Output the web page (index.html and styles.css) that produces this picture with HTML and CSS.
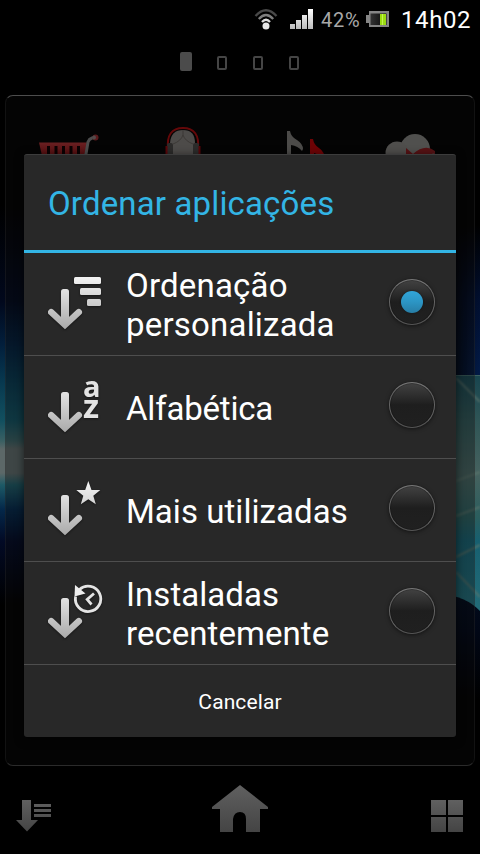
FILE: index.html
```html
<!DOCTYPE html>
<html lang="pt">
<head>
<meta charset="utf-8">
<title>Ordenar aplicações</title>
<link rel="stylesheet" href="styles.css">
</head>
<body>
<div class="screen">
  <svg class="wallpaper" width="480" height="854" viewBox="0 0 480 854" aria-hidden="true">
    <defs>
      <linearGradient id="wl" x1="0" y1="0" x2="0" y2="1">
        <stop offset="0" stop-color="#000"/><stop offset=".24" stop-color="#01081c"/><stop offset=".35" stop-color="#021f3c"/>
        <stop offset=".44" stop-color="#07384f"/><stop offset=".54" stop-color="#12505f"/><stop offset=".59" stop-color="#3a6063"/><stop offset=".61" stop-color="#5c6868"/><stop offset=".67" stop-color="#5c6868"/>
        <stop offset=".7" stop-color="#1d5a66"/><stop offset=".76" stop-color="#04284a"/><stop offset=".84" stop-color="#020a25"/><stop offset="1" stop-color="#000"/>
      </linearGradient>
      <linearGradient id="wr" x1="0" y1="0" x2="0" y2="1">
        <stop offset="0" stop-color="#000"/><stop offset=".5" stop-color="#010f30"/><stop offset="1" stop-color="#021b48"/>
      </linearGradient>
      <linearGradient id="wt" x1="0" y1="0" x2="0" y2="1">
        <stop offset="0" stop-color="#18454f"/><stop offset=".2" stop-color="#305656"/><stop offset=".42" stop-color="#46625f"/>
        <stop offset=".6" stop-color="#2b5e5e"/><stop offset=".7" stop-color="#176070"/><stop offset="1" stop-color="#236c78"/>
      </linearGradient>
      <linearGradient id="wb" x1="0" y1="0" x2="0" y2="1">
        <stop offset="0" stop-color="#020b1c"/><stop offset=".35" stop-color="#010716"/><stop offset="1" stop-color="#000"/>
      </linearGradient>
      <linearGradient id="fade" x1="0" y1="0" x2="1" y2="0">
        <stop offset="0" stop-color="#000" stop-opacity=".75"/><stop offset=".7" stop-color="#000" stop-opacity=".2"/><stop offset="1" stop-color="#000" stop-opacity="0"/>
      </linearGradient>
      <filter id="soft" x="-50%" y="-20%" width="200%" height="140%"><feGaussianBlur stdDeviation="1"/></filter>
    </defs>
    <rect x="0" y="205" width="40" height="400" fill="url(#wl)"/>
    <rect x="440" y="225" width="40" height="150" fill="url(#wr)"/>
    <rect x="450" y="225" width="30" height="150" fill="url(#fade)"/>
    <path d="M440 375H480V612Q466 600 440 596Z" fill="url(#wt)"/>
    <path d="M456 378L480 402M456 481L480 472M456 516L480 507M456 557L480 545M456 572L480 597" fill="none" stroke="#5c756c" stroke-width="1.500" filter="url(#soft)"/>
    <path d="M456 375.500H480" stroke="#3b6060"/>
    <path d="M440 594Q466 596 480 611V700H440Z" fill="url(#wb)"/>
  </svg>

  <header class="status">
    <svg class="wifi" width="24" height="22" viewBox="0 0 24 22">
      <g fill="none" stroke-width="2.300">
        <path d="M1.500 7Q12-4.500 22.500 7" stroke="#494949"/>
        <path d="M4.800 10Q12 2 19.200 10" stroke="#7d7d7d"/>
        <path d="M8 13Q12 8.500 16 13" stroke="#ddd"/>
      </g>
      <circle cx="12" cy="17" r="3.500" fill="#e8e8e8"/>
    </svg>
    <svg class="signal" width="24" height="20" viewBox="0 0 24 20">
      <defs><linearGradient id="sg" x1="0" y1="0" x2="0" y2="1"><stop offset="0" stop-color="#fff"/><stop offset="1" stop-color="#bbb"/></linearGradient></defs>
      <path d="M0 15h5v5H0zM6 11h5v9H6zM12 6h5v14h-5zM18 0h5v20h-5z" fill="url(#sg)"/>
    </svg>
    <span class="percent">42%</span>
    <svg class="battery" width="23" height="17" viewBox="0 0 23 17">
      <defs><linearGradient id="bg" x1="0" y1="0" x2="1" y2="0"><stop offset="0" stop-color="#333"/><stop offset="1" stop-color="#050505"/></linearGradient></defs>
      <path d="M3 0H23V16H3V12H0V4H3Z" fill="#858585"/>
      <rect x="4.500" y="2.500" width="16" height="11.500" fill="url(#bg)"/>
      <rect x="14" y="3" width="6" height="11" fill="#9bdc12"/><path d="M16.500 3v11" stroke="#c4f451"/>
    </svg>
    <time class="clock">14h02</time>
  </header>

  <nav class="pages"><i class="page current"></i><i class="page"></i><i class="page"></i><i class="page"></i></nav>

  <main class="panel">
    <svg class="app" width="120" height="64" viewBox="6 95 120 64">
      <defs><linearGradient id="cart" x1="0" y1="0" x2="0" y2="1"><stop offset="0" stop-color="#6a2022"/><stop offset="1" stop-color="#4b0608"/></linearGradient></defs>
      <path d="M39 141.500H87L84 159H43Z" fill="url(#cart)"/>
      <path d="M48.500 145v14M56 145v14M63.500 145v14M71 145v14M78.500 145v14" stroke="#0b0203" stroke-width="3"/>
      <path d="M85 159L88 141Q89 138 92 137H96" fill="none" stroke="#4c4c4c" stroke-width="3"/>
      <circle cx="95.500" cy="136.500" r="3" fill="#5b1a1c"/><circle cx="94" cy="136.500" r="2" fill="#524b4b"/>
    </svg>
    <svg class="app" width="114" height="64" viewBox="126 95 114 64">
      <path d="M170 159V142Q171 129 183 129T195 142V159Z" fill="#4d4b49"/>
      <path d="M183 134V129M183 134Q181 140 173 143M183 134Q185 140 193 143" stroke="#3c3936" fill="none"/>
      <path d="M168 148Q166 127 183 127T198 148" fill="none" stroke="#650809" stroke-width="2"/>
      <rect x="167" y="142" width="6" height="14" rx="2" fill="#2c2b2a"/><rect x="193" y="142" width="6" height="14" rx="2" fill="#2c2b2a"/>
      <path d="M166.500 145v14M199.500 145v14" stroke="#590508" stroke-width="2"/>
    </svg>
    <svg class="app" width="114" height="64" viewBox="240 95 114 64">
      <path d="M287 159V130H290Q291 136 297 139Q303 143 303 148L302 150Q298 145 291 144V159Z" fill="#4c4b49"/>
      <path d="M310 159V138H313Q314 144 319 147Q325 151 325 159H323Q318 153 314 152V159Z" fill="#6e0305"/>
    </svg>
    <svg class="app" width="118" height="64" viewBox="354 95 118 64">
      <circle cx="415" cy="148" r="15" fill="#50504e"/><circle cx="397" cy="152" r="11.500" fill="#4f4e4c"/>
      <path d="M406 147L413 153Q425 142 435 150V159H406Z" fill="#561214"/><path d="M429 155Q433 150 438 155L439 159H427Z" fill="#4c4c4c"/>
    </svg>
  </main>

  <footer class="dock">
    <svg width="36" height="32" viewBox="0 0 36 32">
      <defs><linearGradient id="dg" x1="0" y1="0" x2="0" y2="1"><stop offset="0" stop-color="#606060"/><stop offset="1" stop-color="#444"/></linearGradient></defs>
      <path d="M6 0h9v20h7L11 31.500 0 20h6zM18 4h17v3H18zM18 9h17v3H18zM18 14h17v3H18z" fill="url(#dg)"/>
    </svg>
    <svg class="home" width="56" height="48" viewBox="0 0 56 48">
      <path d="M28 0L56 22V24H48V47H34V34Q34 27 28 27T21 34V47H8V24H0V22Z" fill="url(#dg)"/>
    </svg>
    <svg width="32" height="32" viewBox="0 0 32 32"><path d="M0 0h15v15H0zM17 0h15v15H17zM0 17h15v15H0zM17 17h15v15H17z" fill="url(#dg)"/></svg>
  </footer>

  <section class="dialog" role="dialog">
    <h1 class="title">Ordenar aplicações</h1>
    <ul class="options">
      <li class="option">
        <svg class="icon" width="56" height="102" viewBox="48 0 56 102">
          <defs>
            <linearGradient id="ig" gradientUnits="userSpaceOnUse" x1="0" y1="22" x2="0" y2="76"><stop offset="0" stop-color="#f6f6f6"/><stop offset="1" stop-color="#aaa"/></linearGradient>
            <g id="arrow">
              <path d="M51.200 59.200L65 72L78.800 59.200" fill="none" stroke="url(#ig)" stroke-width="6.400" stroke-linecap="round"/>
              <rect x="61" y="36" width="8" height="36" rx="2.500" fill="url(#ig)"/>
            </g>
          </defs>
          <use href="#arrow"/>
          <g fill="url(#ig)"><rect x="74" y="24" width="27" height="7" rx="1.500"/><rect x="80" y="35" width="21" height="7" rx="1.500"/><rect x="87" y="46" width="14" height="7" rx="1.500"/></g>
        </svg>
        <span class="label two-line wide">Ordenação personalizada</span>
        <span class="radio checked"></span>
      </li>
      <li class="option">
        <svg class="icon" width="56" height="102" viewBox="48 0 56 102">
          <use href="#arrow"/>
          <text class="az" x="83" y="41">a</text><text class="az z" x="83" y="62">z</text>
        </svg>
        <span class="label tight">Alfabética</span>
        <span class="radio"></span>
      </li>
      <li class="option">
        <svg class="icon" width="56" height="102" viewBox="48 0 56 102">
          <use href="#arrow"/>
          <path d="M88.300 22L91.500 31H100.300L93.300 36.700L95.800 45.300L88.300 40.300L80.800 45.300L83.300 36.700L76.300 31H85.200Z" fill="url(#ig)"/>
        </svg>
        <span class="label">Mais utilizadas</span>
        <span class="radio"></span>
      </li>
      <li class="option">
        <svg class="icon" width="56" height="102" viewBox="48 0 56 102">
          <use href="#arrow"/>
          <path d="M79.500 27.500A12.700 12.700 0 1 1 75.600 34.500" fill="none" stroke="#e4e4e4" stroke-width="2.800"/>
          <path d="M75 23L85.500 31.500L74.500 34.500Z" fill="#eee"/>
          <path d="M94 31.500L87.200 37.500L91.500 42.500" fill="none" stroke="#e4e4e4" stroke-width="2.800"/>
        </svg>
        <span class="label two-line">Instaladas recentemente</span>
        <span class="radio"></span>
      </li>
    </ul>
    <button class="cancel">Cancelar</button>
  </section>
</div>
</body>
</html>
```
FILE: styles.css
```css
* { box-sizing: border-box; }
body { margin: 0; background: #000; font-family: Roboto, "Liberation Sans", sans-serif; }
.screen { position: relative; width: 480px; height: 854px; overflow: hidden; background: #000; display: flex; flex-direction: column; }
.wallpaper { position: absolute; left: 0; top: 0; }
svg { display: block; flex: none; }

.status { height: 40px; display: flex; justify-content: flex-end; align-items: center; padding-right: 10px; }
.wifi { margin-right: 12px; margin-bottom: 1px; }
.signal { margin-right: 7px; margin-bottom: 2px; }
.percent { width: 39px; margin-right: 6px; font-size: 20px; color: #a8a8a8; letter-spacing: .8px; white-space: nowrap; }
.battery { margin-right: 12px; margin-bottom: 2px; }
.clock { width: 69px; font-size: 24px; color: #fff; letter-spacing: .6px; white-space: nowrap; }

.pages { height: 55px; display: flex; gap: 26px; padding: 16px 0 0 180px; }
.page { width: 10px; height: 14px; border: 2px solid #454545; border-radius: 2px; }
.page.current { width: 12px; height: 19px; margin: -4px -1px 0 0; border: 0; background: #4b4b4b; }

.panel { position: relative; flex: none; width: 470px; height: 671px; margin: 0 5px; display: flex; align-items: flex-start; border: 1px solid rgba(60, 60, 60, .25); border-top-color: #4d4d4d; border-bottom-color: #2b2b2b; border-radius: 8px; background: rgba(12, 12, 12, .36); }

.dock { flex: 1; display: flex; justify-content: space-between; padding: 34px 17px 0 16px; }
.home { margin: -15px 0 0 -3px; }

.dialog { position: absolute; left: 24px; top: 154px; width: 432px; height: 583px; display: flex; flex-direction: column; background: #282828; border-radius: 3px; border-top: 1px solid #3c3c3c; box-shadow: 0 2px 10px rgba(0, 0, 0, .6); }
.title { height: 98px; margin: 0; padding: 0 24px; border-bottom: 3px solid #33b5e5; color: #33b5e5; font-size: 33px; font-weight: 400; line-height: 97px; letter-spacing: .15px; white-space: nowrap; }
.options { margin: 0; padding: 0; list-style: none; }
.option { height: 103px; display: flex; align-items: center; padding: 0 21px 0 24px; border-bottom: 1px solid #4e4e4e; }
.icon { margin-right: 22px; filter: drop-shadow(0 1px 1px rgba(0, 0, 0, .45)); }
.az { font: 700 29px "Open Sans", sans-serif; fill: #e3e3e3; }
.az.z { font-size: 33px; }
.label { flex: 1; padding-top: 3px; color: #fff; font-size: 33px; line-height: 39px; letter-spacing: .05px; }
.label.two-line { padding-top: 1px; }
.label.wide { letter-spacing: .2px; }
.label.tight { letter-spacing: -.2px; }
.radio { flex: none; width: 46px; height: 46px; margin-top: -4px; display: grid; place-items: center; border: 1px solid #656565; border-top-color: #777; border-bottom-color: #555; border-radius: 50%; background: linear-gradient(#424242, #292929 35%, #1e1e1e 50%, #202020); box-shadow: 0 1px 4px rgba(0, 0, 0, .55), inset 0 0 0 1px rgba(0, 0, 0, .2); }
.radio.checked::after { content: ""; width: 22px; height: 22px; border-radius: 50%; background: linear-gradient(#31a6da, #2c95c4 50%, #277da5); box-shadow: 0 0 2px #111; }
.cancel { flex: 1; padding: 1px 0 0; border: 0; background: none; color: #fff; font: 400 21px Roboto, "Liberation Sans", sans-serif; letter-spacing: .1px; }
```
